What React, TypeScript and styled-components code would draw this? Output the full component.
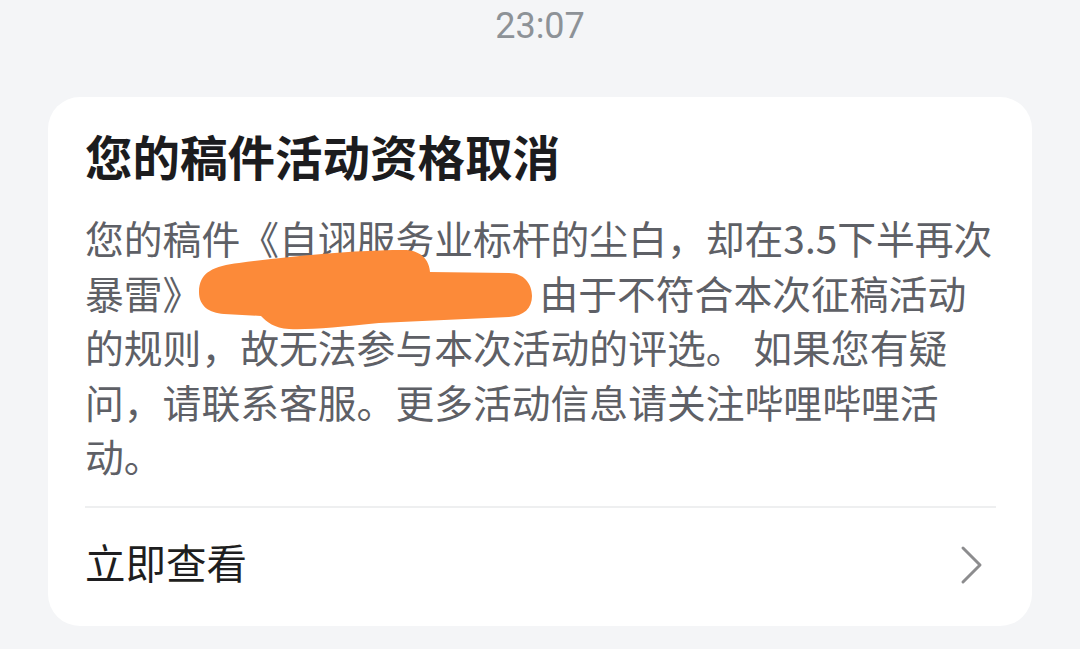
import React from "react";
import styled, { createGlobalStyle } from "styled-components";

const Global = createGlobalStyle`
  html, body { margin: 0; padding: 0; background: #f4f5f7; }
  body { width: 1080px; height: 649px; overflow: hidden; }
`;

const Page = styled.div`
  width: 1080px;
  height: 649px;
  background: #f4f5f7;
  display: flex;
  flex-direction: column;
  align-items: center;
  font-family: "Noto Sans CJK SC", "Noto Sans", sans-serif;
`;

const Time = styled.div`
  font-family: Roboto, "Noto Sans", sans-serif;
  font-size: 36px;
  line-height: 52px;
  color: #8d9297;
  height: 52px;
`;

const Card = styled.div`
  margin-top: 45px;
  width: 984px;
  box-sizing: border-box;
  background: #ffffff;
  border-radius: 32px;
  padding: 26px 36px 0 37px;
  display: flex;
  flex-direction: column;
`;

const Title = styled.h2`
  margin: 0;
  font-size: 47.5px;
  font-weight: 700;
  line-height: 66px;
  color: #1c1c1e;
`;

const Body = styled.div`
  margin-top: 21px;
  font-size: 38.8px;
  line-height: 54.6px;
  color: #5e6066;
  white-space: nowrap;
`;

const Line = styled.div`
  display: block;
`;

const Redaction = styled.span`
  position: relative;
  display: inline-block;
  width: 338px;
  height: 1px;
`;

const Scribble = styled.svg`
  position: absolute;
  left: -202px;
  top: -306px;
  width: 600px;
  height: 400px;
  overflow: visible;
  pointer-events: none;
`;

const Divider = styled.div`
  margin-top: 23px;
  height: 2px;
  background: #eeeff0;
`;

const Action = styled.div`
  display: flex;
  align-items: center;
  justify-content: space-between;
  height: 118px;
`;

const ActionLabel = styled.span`
  font-size: 40.5px;
  color: #1e1e20;
  line-height: 1;
  padding-bottom: 10px;
`;

const Chevron = styled.svg`
  width: 24px;
  height: 40px;
  margin-right: 12px;
  margin-bottom: 4px;
`;

export default function App() {
  return (
    <>
      <Global />
      <Page>
        <Time>23:07</Time>
        <Card>
          <Title>您的稿件活动资格取消</Title>
          <Body>
            <Line>您的稿件《自诩服务业标杆的尘白，却在3.5下半再次</Line>
            <Line>
              暴雷》
              <Redaction>
                <Scribble viewBox="0 0 600 400">
                  <path
                    fill="#fc8a39"
                    d="M 200 290 C 200 270, 215 264, 240 261 C 300 253, 360 248, 405 248 C 420 248, 430 256, 431 270 L 510 271 C 525 271, 533 282, 533 294 C 533 306, 525 314, 510 315 L 380 321 C 340 325, 310 328, 290 327 C 275 326, 268 320, 262 314 L 225 312 C 210 311, 200 304, 200 290 Z"
                  />
                </Scribble>
              </Redaction>
              由于不符合本次征稿活动
            </Line>
            <Line>的规则，故无法参与本次活动的评选。 如果您有疑</Line>
            <Line>问，请联系客服。更多活动信息请关注哔哩哔哩活</Line>
            <Line>动。</Line>
          </Body>
          <Divider />
          <Action>
            <ActionLabel>立即查看</ActionLabel>
            <Chevron viewBox="0 0 24 40">
              <path d="M3 3 L20 20 L3 37" stroke="#8c8c8e" strokeWidth="3" fill="none" strokeLinecap="round" strokeLinejoin="round" />
            </Chevron>
          </Action>
        </Card>
      </Page>
    </>
  );
}
